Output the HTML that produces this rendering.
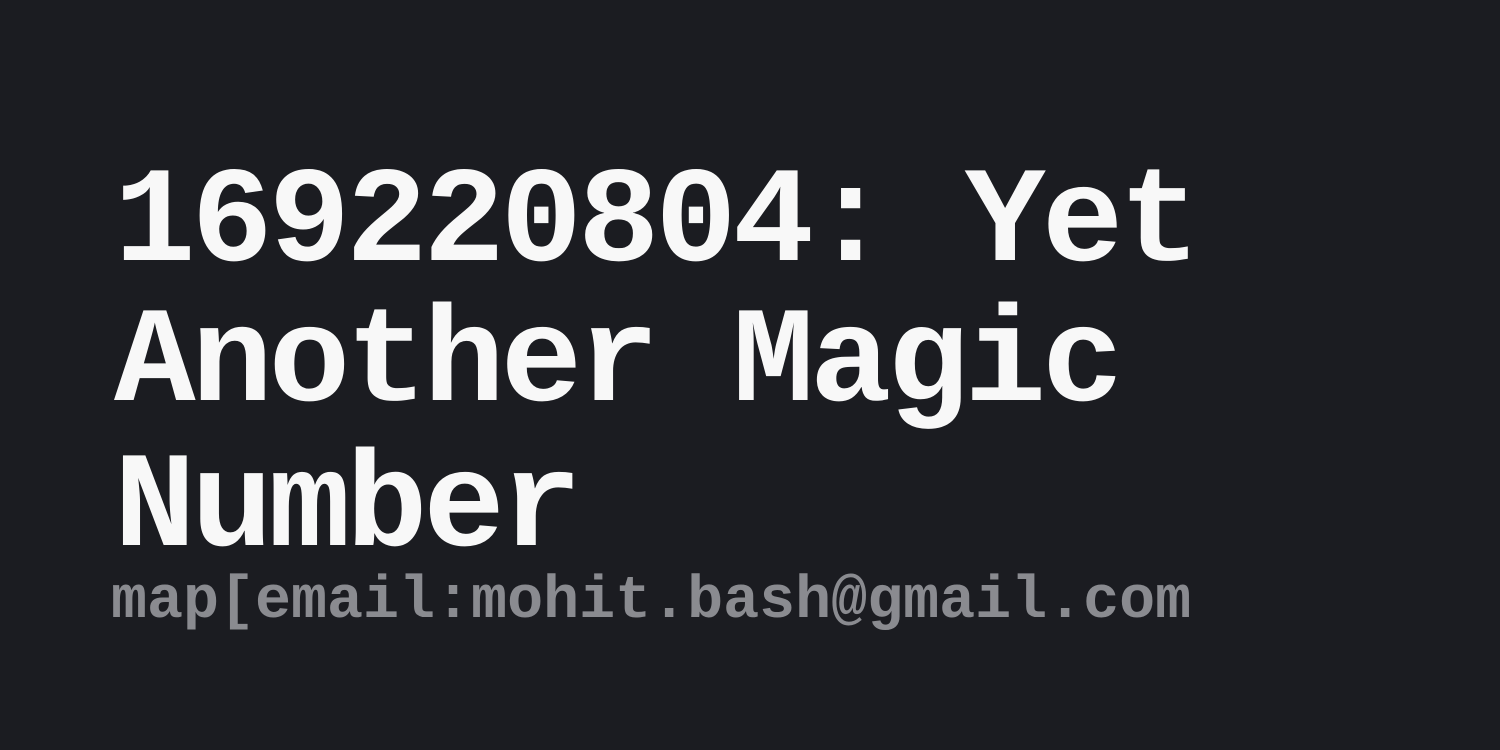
<!DOCTYPE html>
<html><head><meta charset="utf-8"><style>
html,body{margin:0;padding:0;width:1500px;height:750px;background:#1b1c21;overflow:hidden}
.t{position:absolute;left:114px;font-family:"Liberation Mono",monospace;font-weight:bold;color:#f8f8f8;font-size:136px;line-height:142px;letter-spacing:-4.3px;white-space:nowrap}
.s{position:absolute;left:111px;top:572px;font-family:"Liberation Mono",monospace;font-weight:bold;color:#8a8b90;font-size:60px;line-height:60px;white-space:nowrap}
</style></head><body>
<div class="t" style="top:153px">169220804: Yet</div>
<div class="t" style="top:293px">Another Magic</div>
<div class="t" style="top:438px">Number</div>
<div class="s">map[email:mohit.bash@gmail.com</div>
</body></html>
